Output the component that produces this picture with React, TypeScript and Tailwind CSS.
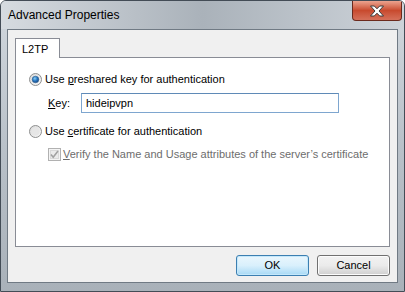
import React from 'react';

const Radio: React.FC<{ checked?: boolean }> = ({ checked }) => (
    <svg width="13" height="13" viewBox="0 0 13 13" className="shrink-0">
        <defs>
            <linearGradient id={checked ? 'rg1' : 'rg0'} x1="0" y1="0" x2="1" y2="1">
                <stop offset="0" stopColor="#d8d8d8" />
                <stop offset="1" stopColor="#f8f8f8" />
            </linearGradient>
            <radialGradient id="dot" cx="0.4" cy="0.35" r="0.7">
                <stop offset="0" stopColor="#8fd0f5" />
                <stop offset="0.5" stopColor="#2a7ac4" />
                <stop offset="1" stopColor="#163f7a" />
            </radialGradient>
        </defs>
        <circle cx="6.5" cy="6.5" r="6" fill={checked ? 'url(#rg1)' : 'url(#rg0)'} stroke="#8e8f8f" />
        {checked ? <circle cx="6.5" cy="6.5" r="3.3" fill="url(#dot)" stroke="#2b5f91" strokeWidth="0.6" /> : <circle cx="6.5" cy="6.5" r="4" fill="#e6e6e6" />}
    </svg>
);

const Check: React.FC = () => (
    <svg width="13" height="13" viewBox="0 0 13 13" className="shrink-0">
        <rect x="0.5" y="0.5" width="12" height="12" fill="#f4f4f4" stroke="#b1b1b1" />
        <rect x="2.5" y="2.5" width="8" height="8" fill="#ebebeb" stroke="#dadada" />
        <path d="M3 6.5 L5.2 9.2 L10 3" fill="none" stroke="#a2a2a2" strokeWidth="1.6" />
    </svg>
);

const App: React.FC = () => {
    return (
        <div className="w-[405px] h-[292px] flex flex-col font-['Liberation_Sans',Arial,sans-serif] text-[11px] text-black bg-gradient-to-b from-[#d2d8de] via-[#b9c1c9] to-[#a9b1b9] border border-[#434c56] rounded-t-[6px] overflow-hidden">
            {/* Title bar */}
            <div className="h-[28px] flex items-start justify-between bg-gradient-to-r from-[#d6dbe0] via-[#aab2ba] to-[#cdd3d9]">
                <span className="pl-[7px] pt-[7px] leading-[15px] text-[12px]">Advanced Properties</span>
                <div className="mr-[2px] w-[50px] h-[20px] rounded-b-[4px] border border-t-0 border-[#6b2a1d] bg-gradient-to-b from-[#eba38f] via-[#c84a2e] to-[#d5705a] flex items-center justify-center">
                    <svg width="16" height="12" viewBox="0 0 16 12">
                        <path d="M1.5 1 H5.3 L8 3.8 L10.7 1 H14.5 L10 6 L14.5 11 H10.7 L8 8.2 L5.3 11 H1.5 L6 6 Z" fill="#ffffff" stroke="#3b3b3b" strokeWidth="1" strokeLinejoin="round" />
                    </svg>
                </div>
            </div>

            {/* Client area */}
            <div className="flex-1 mx-[6px] mb-[8px] bg-[#f0f0f0] border border-[#707a84] flex flex-col pt-[8px] pl-[7px] pr-[7px]">
                {/* Tabs */}
                <div className="flex">
                    <div className="w-[45px] h-[20px] bg-white border border-b-0 border-[#898c95] pl-[6px] pt-[3px] leading-[15px] -mb-px relative z-10">L2TP</div>
                </div>
                <div className="h-[190px] bg-white border border-[#898c95] flex flex-col pl-[13px] pt-[14px] whitespace-nowrap">
                    <div className="h-[15px] flex items-center gap-[3px]">
                        <Radio checked />
                        <span className="leading-[15px]">Use <u>p</u>reshared key for authentication</span>
                    </div>
                    <div className="mt-[6px] flex items-center pl-[19px]">
                        <span className="w-[33px] leading-[15px]"><u>K</u>ey:</span>
                        <div className="w-[258px] h-[20px] border border-[#7ea6cf] border-t-[#5f8ab7] bg-white flex items-center pl-[4px] leading-[15px]">hideipvpn</div>
                    </div>
                    <div className="mt-[11px] h-[15px] flex items-center gap-[3px]">
                        <Radio />
                        <span className="leading-[15px]">Use <u>c</u>ertificate for authentication</span>
                    </div>
                    <div className="mt-[8px] h-[15px] flex items-center gap-[2px] pl-[19px]">
                        <Check />
                        <span className="leading-[15px] text-[#6d6d6d]"><u>V</u>erify the Name and Usage attributes of the server’s certificate</span>
                    </div>
                </div>

                {/* Buttons */}
                <div className="mt-[8px] flex justify-end gap-[8px]">
                    <button className="w-[73px] h-[21px] rounded-[3px] border border-[#3c7fb1] bg-gradient-to-b from-[#eaf6fd] via-[#d9f0fc] to-[#a7d9f5] shadow-[inset_0_0_0_1px_#c4e8fb] leading-[15px]">OK</button>
                    <button className="w-[73px] h-[21px] rounded-[3px] border border-[#707070] bg-gradient-to-b from-[#f2f2f2] via-[#ebebeb] to-[#cfcfcf] shadow-[inset_0_0_0_1px_#fcfcfc] leading-[15px]">Cancel</button>
                </div>
            </div>
        </div>
    );
};

export default App;
